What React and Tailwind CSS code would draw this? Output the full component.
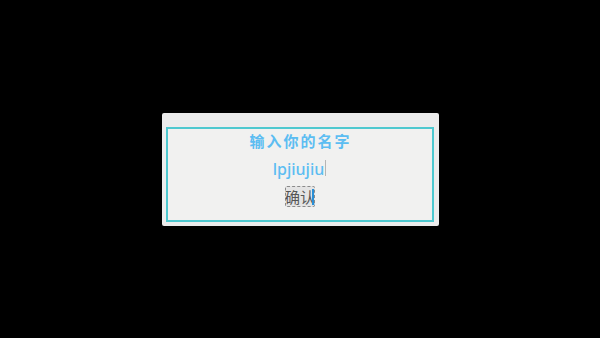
export default function App() {
  return (
    <div className="w-[600px] h-[338px] bg-black flex items-center justify-center" style={{ fontFamily: '"Noto Sans", "Noto Sans CJK SC", sans-serif' }}>
      <div className="w-[277px] h-[113px] mt-[1px] bg-[#ececec] rounded-[2px] pt-[14px] pl-[4px] pr-[5px] pb-[4px]">
        <div className="h-full border-2 border-[#4ec8cf] bg-[#f1f1f0] flex flex-col items-center">
          <div className="text-[15px] leading-[20px] font-bold text-[#5cbdf2] mt-[2px] tracking-[2px] pl-[2px]">输入你的名字</div>
          <div className="flex items-end mt-[8px] h-[20px]">
            <span className="text-[16px] leading-[20px] font-medium text-[#5cbdf2]">lpjiujiu</span>
            <span className="w-px h-[16px] bg-[#b5b5b5] mb-[3px] ml-[1px]" />
          </div>
          <div className="mt-[7px] flex items-center">
            <div className="w-[30px] h-[21px] border border-dashed border-[#8a8a8a] bg-[#e4e4e4] rounded-[2px] flex items-center justify-center text-[15px] leading-[18px] text-[#555] whitespace-nowrap">确认</div>
            <span className="w-[2px] h-[16px] bg-[#2a8fd6] -ml-[3px]" />
          </div>
        </div>
      </div>
    </div>
  );
}
